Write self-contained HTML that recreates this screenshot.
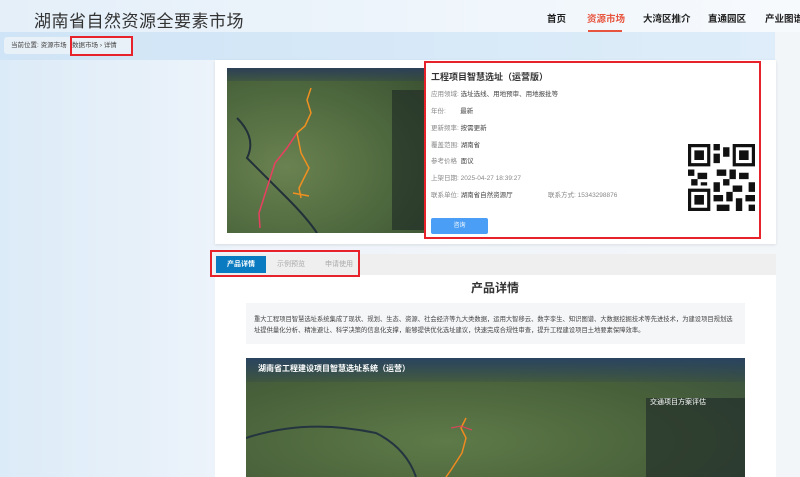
<!DOCTYPE html>
<html><head><meta charset="utf-8"><style>
*{margin:0;padding:0;box-sizing:border-box}
body{width:800px;height:477px;overflow:hidden;font-family:"Liberation Sans","Noto Sans CJK SC",sans-serif;background:linear-gradient(90deg,#dcebf8 0%,#eef4fa 30%,#f3f6f9 100%);position:relative}
.hdr{position:absolute;left:0;top:0;width:800px;height:32px;background:linear-gradient(90deg,#e4eff9,#f7fafd)}
.logo{position:absolute;left:34px;top:7px;font-size:17px;color:#333;letter-spacing:0.5px}
.nav{position:absolute;top:11px;font-size:9.5px;color:#222;font-weight:bold;white-space:nowrap}
.crumb{position:absolute;left:0;top:32px;width:775px;height:28px;background:linear-gradient(90deg,#cfe4f6,#deedf9)}
.cb{position:absolute;left:4px;top:37px;width:128px;height:17px;background:#e9f1f8;border-radius:3px;font-size:6.5px;color:#444;line-height:17px;padding-left:7px}
.red{position:absolute;border:2px solid #e8222a}
.card{position:absolute;left:215px;top:60px;width:561px;height:184px;background:#fff;box-shadow:0 1px 3px rgba(0,0,0,.1)}
.map{position:absolute;overflow:hidden;background:radial-gradient(ellipse at 30% 60%,#6a8250,#4e683e 55%,#3a5032)}
.lbl{font-size:6.5px;color:#888;position:absolute;left:431px}
.val{color:#444}
.btn{position:absolute;left:431px;top:218px;width:57px;height:16px;background:#4a9ef5;border-radius:2px;color:#fff;font-size:6px;text-align:center;line-height:16px}
.sec{position:absolute;left:215px;top:254px;width:561px;height:223px;background:#fff}
.tabbar{position:absolute;left:215px;top:254px;width:561px;height:21px;background:#efefef}
.tab{position:absolute;top:256px;height:17px;font-size:7px;line-height:17px;text-align:center;color:#aaa}
.desc{position:absolute;left:246px;top:303px;width:499px;height:41px;background:#f5f6f8;font-size:6.3px;color:#444;padding:11px 8px;line-height:11px}
</style></head><body>
<div class="hdr"></div>
<div class="logo">湖南省自然资源全要素市场</div>
<div class="nav" style="left:547px">首页</div>
<div class="nav" style="left:587px;color:#e8553e">资源市场</div>
<div style="position:absolute;left:588px;top:30px;width:34px;height:2px;background:#e8553e"></div>
<div class="nav" style="left:643px">大湾区推介</div>
<div class="nav" style="left:708px">直通园区</div>
<div class="nav" style="left:765px">产业图谱</div>
<div class="crumb"></div>
<div class="cb">当前位置: 资源市场 &nbsp;&nbsp;数据市场 › 详情</div>
<div class="red" style="left:70px;top:36px;width:63px;height:20px"></div>
<div class="card"></div>
<div class="map" style="left:227px;top:68px;width:198px;height:165px">
<div style="position:absolute;left:0;top:0;width:198px;height:13px;background:linear-gradient(180deg,#2c4058,rgba(40,60,80,.3))"></div>
<div style="position:absolute;left:165px;top:22px;width:33px;height:140px;background:rgba(25,35,35,.55)"></div>
<svg width="198" height="165" style="position:absolute;left:0;top:0"><path d="M10 50 Q30 70 20 90 Q40 110 60 130 Q80 150 90 165" stroke="#22303a" stroke-width="2" fill="none"/><path d="M33 160 L32 145 L40 120 L48 95 L60 80 L70 65" stroke="#e84060" stroke-width="1.5" fill="none"/><path d="M70 65 L78 58 L84 45 L80 32 L84 20 M70 65 L74 85 L82 100 L72 120 L74 130 M66 125 L82 128" stroke="#f09020" stroke-width="1.5" fill="none"/></svg>
</div>
<div class="red" style="left:424px;top:61px;width:337px;height:178px"></div>
<div style="position:absolute;left:431px;top:70px;font-size:9px;font-weight:bold;color:#333">工程项目智慧选址（运营版）</div>
<div class="lbl" style="top:88px">应用领域: <span class="val">选址选线、用地预审、用地报批等</span></div>
<div class="lbl" style="top:105px">年份: &nbsp;&nbsp;&nbsp;&nbsp;&nbsp;&nbsp;&nbsp;<span class="val">最新</span></div>
<div class="lbl" style="top:122px">更新频率: <span class="val">按需更新</span></div>
<div class="lbl" style="top:139px">覆盖范围: <span class="val">湖南省</span></div>
<div class="lbl" style="top:155px">参考价格 &nbsp;<span class="val">面议</span></div>
<div class="lbl" style="top:172px">上架日期: 2025-04-27 18:39:27</div>
<div class="lbl" style="top:189px">联系单位: <span class="val">湖南省自然资源厅</span></div>
<div class="lbl" style="top:189px;left:548px">联系方式: 15343298876</div>
<svg style="position:absolute;left:688px;top:144px" width="67" height="67" viewBox="0 0 21 21"><rect width="21" height="21" fill="#fff"/><g fill="#111"><path d="M0 0h7v7H0zM14 0h7v7h-7zM0 14h7v7H0z"/></g><g fill="#fff"><path d="M1 1h5v5H1zM15 1h5v5h-5zM1 15h5v5H1z"/></g><g fill="#111"><path d="M2 2h3v3H2zM16 2h3v3h-3zM2 16h3v3H2zM8 0h2v2H8zM11 1h2v3h-2zM8 3h2v3H8zM9 8h3v2H9zM0 8h2v2H0zM3 9h3v2H3zM13 8h2v3h-2zM16 9h3v2h-3zM19 12h2v3h-2zM8 12h2v3H8zM11 11h2v2h-2zM14 13h3v2h-3zM8 16h3v2H8zM12 15h2v3h-2zM15 17h2v4h-2zM18 16h3v2h-3zM9 19h4v2H9zM19 19h2v2h-2zM1 11h2v2H1zM4 12h2v1H4z"/></g></svg>
<div class="btn">咨询</div>
<div class="sec"></div>
<div class="tabbar"></div>
<div class="tab" style="left:216px;width:50px;background:#0a7bc0;color:#fff;font-weight:bold">产品详情</div>
<div class="tab" style="left:266px;width:50px">示例预览</div>
<div class="tab" style="left:314px;width:50px">申请使用</div>
<div class="red" style="left:210px;top:250px;width:150px;height:27px"></div>
<div style="position:absolute;left:471px;top:279px;font-size:12px;font-weight:bold;color:#333">产品详情</div>
<div class="desc">重大工程项目智慧选址系统集成了现状、规划、生态、资源、社会经济等九大类数据，运用大智移云、数字孪生、知识图谱、大数据挖掘技术等先进技术，为建设项目规划选址提供量化分析、精准避让、科学决策的信息化支撑，能够提供优化选址建议，快速完成合规性审查，提升工程建设项目土地要素保障效率。</div>
<div class="map" style="left:246px;top:358px;width:499px;height:119px;background:radial-gradient(ellipse at 40% 70%,#5e7a48,#48603a 60%,#3a5040)">
<div style="position:absolute;left:0;top:0;width:499px;height:24px;background:linear-gradient(180deg,#2a4460,rgba(40,60,80,.2))"></div>
<div style="position:absolute;left:12px;top:5px;font-size:8px;color:#fff;font-weight:bold">湖南省工程建设项目智慧选址系统（运营）</div>
<div style="position:absolute;left:400px;top:40px;width:99px;height:79px;background:rgba(25,35,38,.55)"></div>
<div style="position:absolute;left:404px;top:39px;font-size:7px;color:#fff">交通项目方案评估</div>
<svg width="499" height="119" style="position:absolute;left:0;top:0"><path d="M0 80 Q60 60 130 75 Q160 90 170 119" stroke="#253540" stroke-width="2" fill="none"/><path d="M220 60 L215 70 L220 80 L216 95 L205 112 L200 119" stroke="#f08a20" stroke-width="1.5" fill="none"/><path d="M205 70 L215 68 L226 72" stroke="#e84060" stroke-width="1" fill="none"/></svg>
</div>
</body></html>
